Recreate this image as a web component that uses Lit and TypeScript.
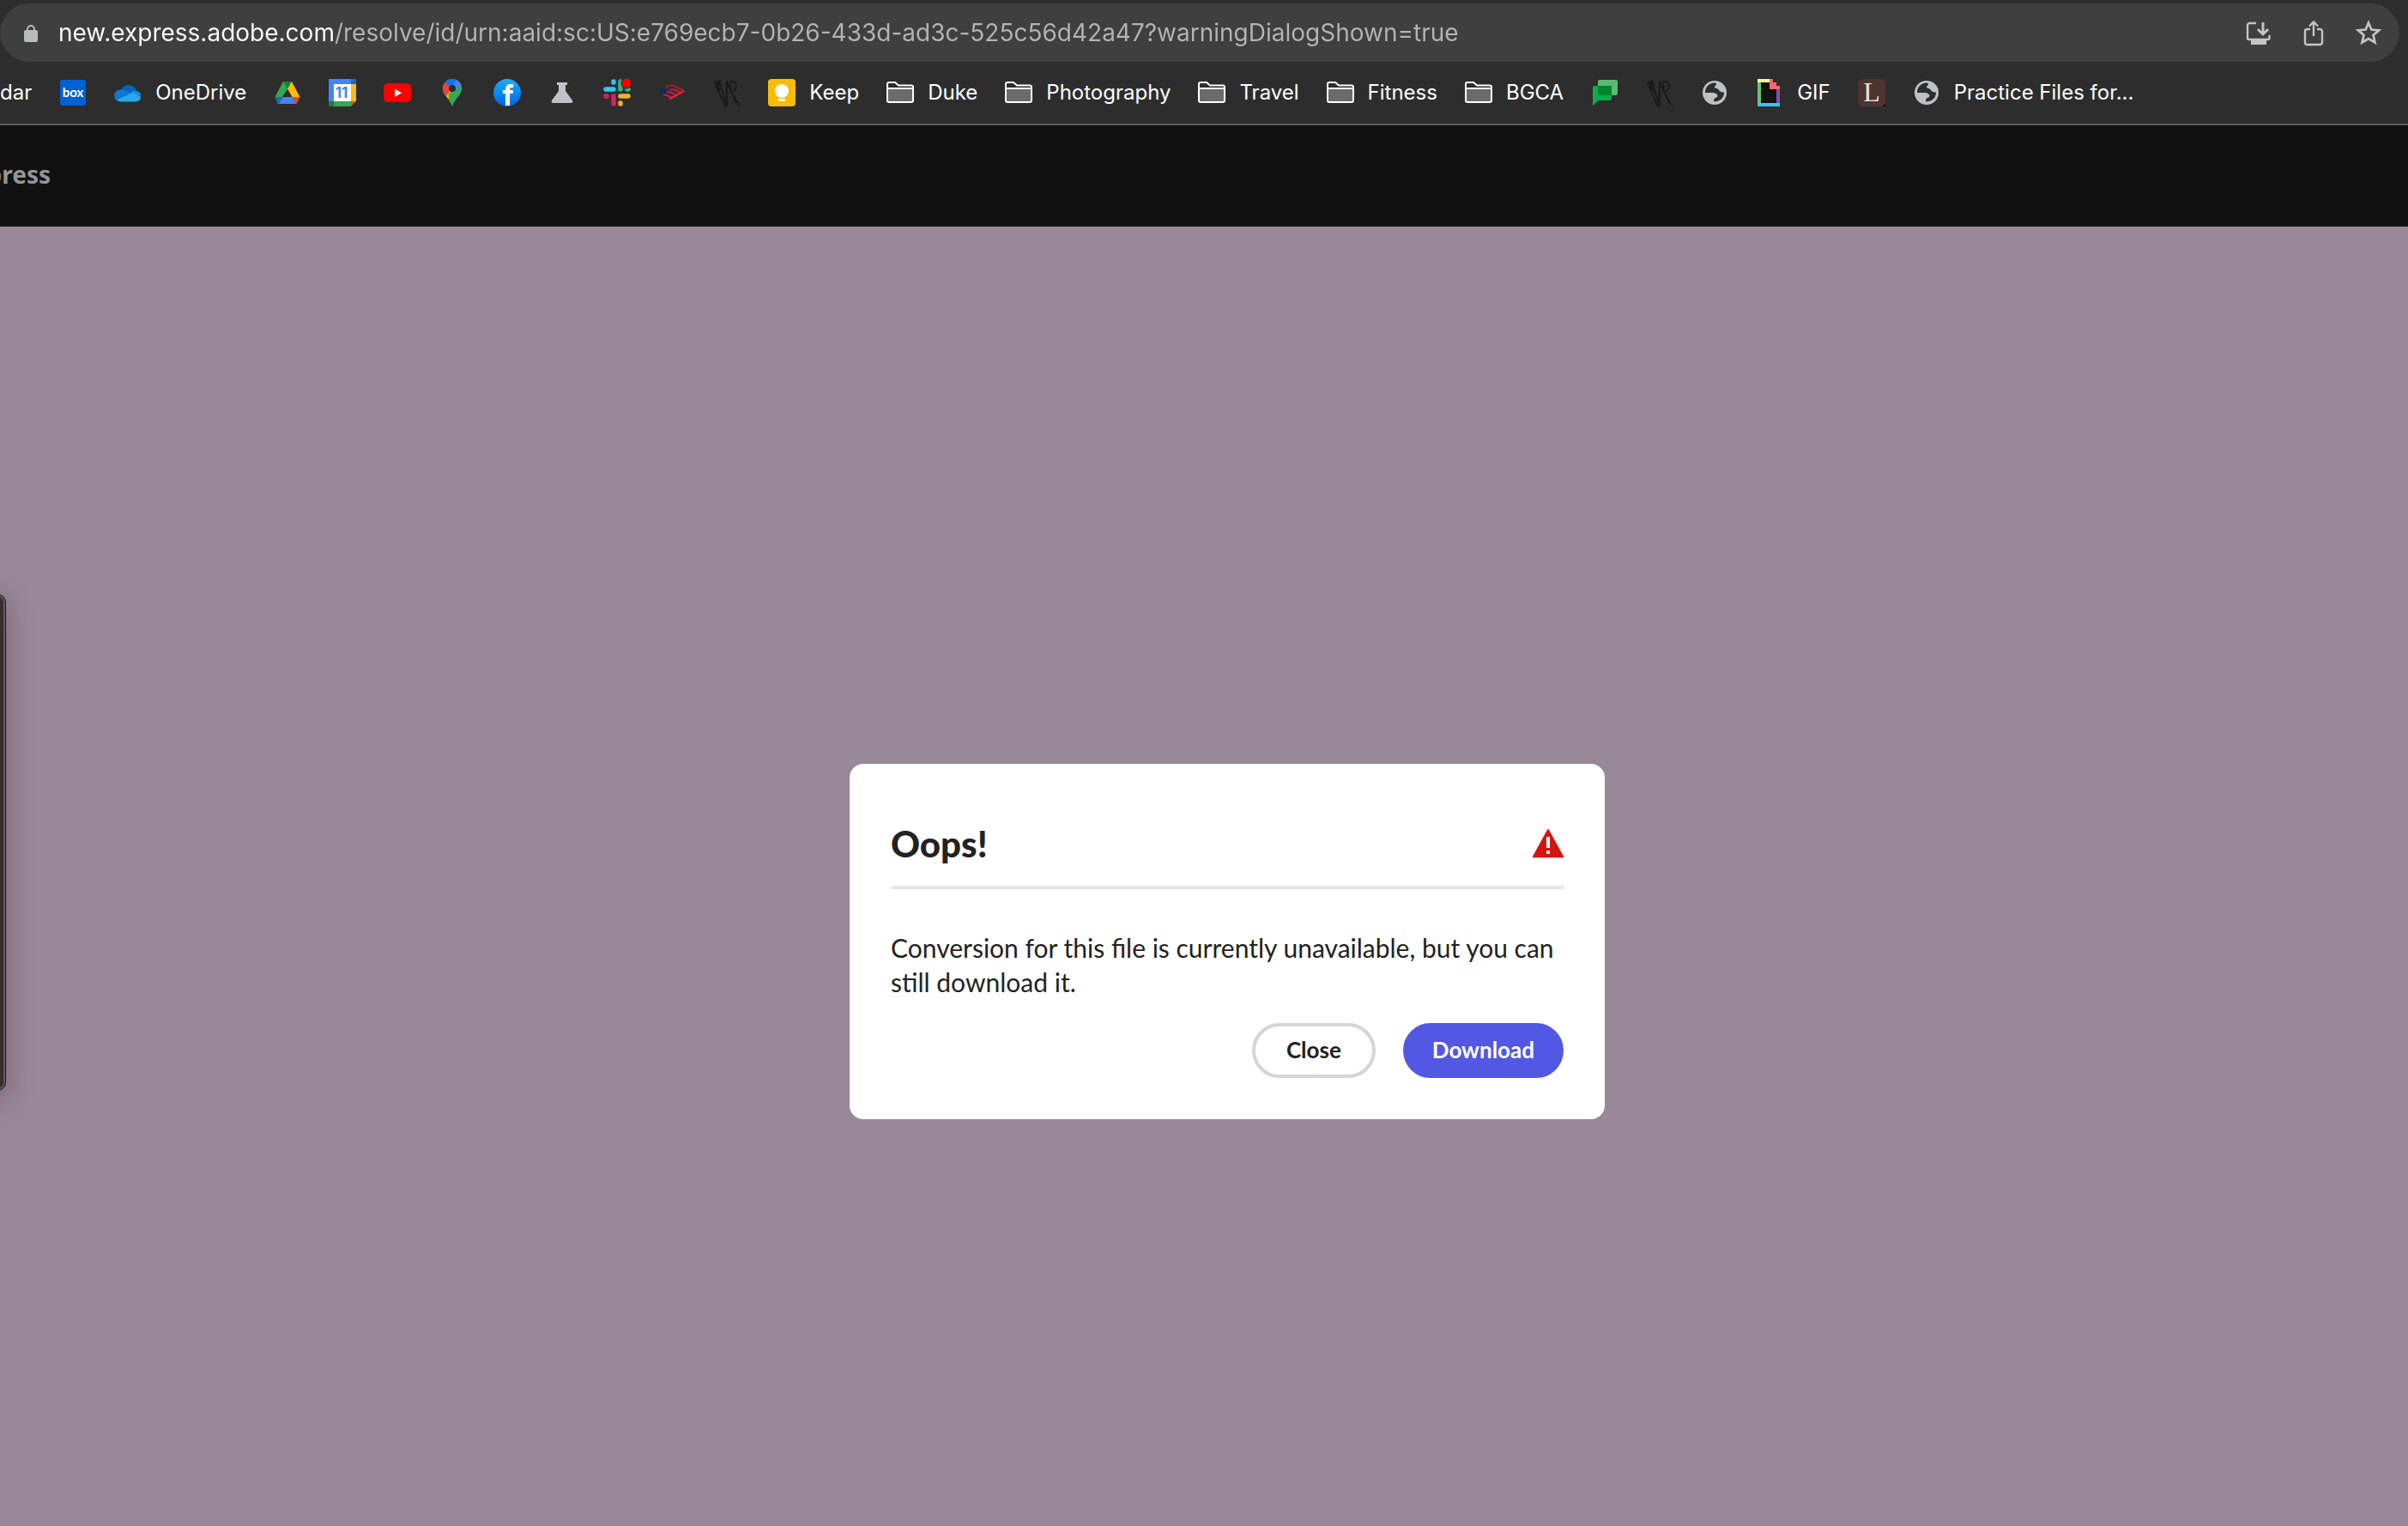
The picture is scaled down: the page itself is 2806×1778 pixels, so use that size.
import { LitElement, html, svg, css, nothing, type SVGTemplateResult } from "lit";
import { customElement, property } from "lit/decorators.js";

const folder = svg`
  <path d="M1 28V5a2 2 0 0 1 2-2h7l4 4h15a2 2 0 0 1 2 2v17a2 2 0 0 1-2 2H3a2 2 0 0 1-2-2z" fill="#2d2d2d"/>
  <path d="M2 12h28v14H2z" fill="#6b6b6b"/>
  <path d="M1 11h30M1 25V6a2 2 0 0 1 2-2h7l4 3.500h15a2 2 0 0 1 2 2V25a2 2 0 0 1-2 2H3a2 2 0 0 1-2-2z" fill="none" stroke="#fff" stroke-width="2"/>`;

const globe = svg`
  <circle cx="16" cy="16" r="14" fill="#bdc1c6"/>
  <path d="M5 16C5 10 9 5 15 4.500c2-.2 3 .3 3 1.500 0 1.500-2 2-2 3.500 0 2 4 1 5 3.500 1 2 3 2.500 6 2.500 0 4-2 8-6 9.800-2 .9-4 1.200-6 .9 0-2 .5-3.500 2-4.200 1.500-.6 2.500-1 2.500-2.200 0-2-2.500-3.800-6-3.800z" fill="#2d2d2d"/>`;

const monogram = svg`
  <path d="M4 9 14 32M9 10l7 22M16 2v30M16 2l-1 30M16 3l11 25M20 3c8-2 10 9 1 12l10 17M20 3v12M2 3c4 2 4 5 3 8M8 1c0 4-1 7-3 9M2 8l5 5M10 6 6 14M5 1l3 5M1 6l6-1" fill="none" stroke="#151515" stroke-width="1.300"/>`;

const icons: Record<string, SVGTemplateResult> = {
  folder,
  globe,
  monogram,
  lock: svg`
    <path d="M12 16v-4a4 4 0 0 1 8 0v4" fill="none" stroke="#b9bbbe" stroke-width="2"/>
    <rect x="8" y="13" width="16" height="14" rx="2" fill="#b9bbbe"/>`,
  install: svg`
    <path d="M13 5H5.500a2.500 2.500 0 0 0-2.500 2.500v15A1.500 1.500 0 0 0 4.500 24h22a2 2 0 0 0 2-2v-3" fill="none" stroke="#c4c4c4" stroke-width="2.400"/>
    <path d="M7 24h18v6H7z" fill="#c4c4c4"/>
    <path d="M21 4v14M15 12l6 6 6-6" fill="none" stroke="#c4c4c4" stroke-width="3"/>`,
  share: svg`
    <path d="M12 12H8.500A2.500 2.500 0 0 0 6 14.500v13A2.500 2.500 0 0 0 8.500 30h15a2.500 2.500 0 0 0 2.500-2.500v-13a2.500 2.500 0 0 0-2.500-2.500H20M16 20V4M11 8.500l5-5 5 5" fill="none" stroke="#c4c4c4" stroke-width="2.400"/>`,
  star: svg`
    <path d="M16 4.500l3.400 8 8.700.8-6.600 5.700 2 8.500L16 23l-7.500 4.500 2-8.500-6.600-5.700 8.700-.8z" fill="none" stroke="#c4c4c4" stroke-width="2.700"/>`,
  box: svg`
    <rect x="1" y="1" width="30" height="30" rx="3" fill="#0061d5"/>
    <text x="16" y="21" font-family="Lato, sans-serif" font-size="15" font-weight="700" text-anchor="middle" fill="#fff">box</text>`,
  onedrive: svg`
    <path d="M8 13a9.500 9.500 0 0 1 18 1l-8 6z" fill="#0364b8"/>
    <path d="M8 12.500a8 8 0 0 1 5.500 1L22 18 3 25a8 8 0 0 1-3-5.500 7.500 7.500 0 0 1 8-7z" fill="#0f78d4"/>
    <path d="M21 15c2-1.300 4-1.500 5.500-1a6.500 6.500 0 0 1 5 5l-9 1-5-3z" fill="#1490df"/>
    <path d="M3 24.500 21.500 16 31 20.500a5.600 5.600 0 0 1-5 6H8c-2 0-4-.7-5-2z" fill="#28a8ea"/>`,
  drive: svg`
    <path d="M11 3h10l-5 9-6.500 9.500-4.500 8L1.500 21z" fill="#34a853"/>
    <path d="M11 3h10l-5 8.500z" fill="#188038"/>
    <path d="M21 3l9.500 18h-9L16 11.500z" fill="#fbbc04"/>
    <path d="M10.500 21h11l5 8h-21z" fill="#4285f4"/>
    <path d="M1.500 21h9l-5 8z" fill="#1967d2"/>
    <path d="M21.500 21h9l-4 8z" fill="#ea4335"/>`,
  calendar: svg`
    <path d="M0 0h26v6H6v20H0z" fill="#4285f4"/>
    <path d="M26 0h6v6h-6z" fill="#1967d2"/>
    <path d="M26 6h6v20h-6z" fill="#fbbc04"/>
    <path d="M6 26h20v6H6z" fill="#34a853"/>
    <path d="M0 26h6v6H0z" fill="#188038"/>
    <path d="M26 26h6l-6 6z" fill="#ea4335"/>
    <path d="M6 6h20v20H6z" fill="#fff"/>
    <text x="15" y="22" font-family="Inter, sans-serif" font-size="17" font-weight="700" text-anchor="middle" fill="#4285f4">11</text>`,
  youtube: svg`
    <rect x="0" y="5" width="32" height="22" rx="5" fill="#f00"/>
    <path d="M13 11.500v9.500l8-4.700z" fill="#fff"/>`,
  maps: svg`
    <clipPath id="pin"><path d="M16 0a11 11 0 0 1 11 11c0 8-8 11-11 21C13 22 5 19 5 11A11 11 0 0 1 16 0z"/></clipPath>
    <g clip-path="url(#pin)">
      <path d="M0 0h32v32H0z" fill="#34a853"/>
      <path d="M28 5 0 36V8l16 3z" fill="#fbbc04"/>
      <path d="M0 13 8 4l8 7-8 10z" fill="#ea4335"/>
      <path d="M7 0h13v6l-4 5-9-7z" fill="#1a73e8"/>
      <path d="M20 0l8 5-13 15-1-9 6-8z" fill="#4285f4"/>
      <path d="M12 17 28 4v28H12z" fill="#34a853"/>
      <path d="M16 11 22 1l5 5-7 8z" fill="#4285f4"/>
    </g>
    <circle cx="16" cy="11" r="4" fill="#2d2d2d"/>`,
  facebook: svg`
    <linearGradient id="fb" x1="0" y1="0" x2="0" y2="1"><stop offset="0" stop-color="#19aeff"/><stop offset="1" stop-color="#0062e0"/></linearGradient>
    <circle cx="16" cy="16" r="16" fill="url(#fb)"/>
    <text x="17" y="31" font-family="Inter, sans-serif" font-size="33" font-weight="700" text-anchor="middle" fill="#fff">f</text>`,
  flask: svg`
    <path d="M10 4h12v3h-2v7l8 11c1 2 0 3-2 3H6c-2 0-3-1-2-3l8-11V7h-2z" fill="#c1c2c8"/>`,
  slack: svg`
    <g fill="none" stroke-width="5.500" stroke-linecap="round">
      <path d="M3 12h9M12 3v1" stroke="#36c5f0"/>
      <path d="M20 3v9M28 12h1" stroke="#2eb67d"/>
      <path d="M20 20h9M20 28v1" stroke="#ecb22e"/>
      <path d="M12 20v9M3 20h1" stroke="#e01e5a"/>
    </g>
    <circle cx="27" cy="5" r="6.500" fill="#2d2d2d"/>
    <circle cx="27" cy="5" r="5.300" fill="#f00"/>`,
  bank: svg`
    <path d="M0 13.500 6 11l8 4-6 4z" fill="#14295c"/>
    <path d="M8 17.500 13 20M12 15l5 3" stroke="#14295c" stroke-width="1.500"/>
    <path d="M9 9.500c3-2 6-2.500 9-1.500l12 6" fill="none" stroke="#a81c34" stroke-width="2.200"/>
    <path d="M14 12.500c2-.8 4-.5 5.500.3L26 16" fill="none" stroke="#c41e3a" stroke-width="2.200"/>
    <path d="M10 15.500c2-.8 3.500-.5 5 .3l6.500 3.200" fill="none" stroke="#c41e3a" stroke-width="2.200"/>
    <path d="M6 19c2-.8 3.500-.5 5 .3l6 3" fill="none" stroke="#c41e3a" stroke-width="2.200"/>
    <path d="M13 23.500l17-9.500" stroke="#dc2440" stroke-width="2.500"/>`,
  keep: svg`
    <rect width="32" height="32" rx="4" fill="#fbbc04"/>
    <circle cx="16" cy="14" r="8" fill="#fff"/>
    <path d="M12 18h8v3h-8zM12 23h8v3h-8z" fill="#fff"/>`,
  chat: svg`
    <rect x="8" y="1" width="23" height="18" rx="2" fill="#5bb974"/>
    <path d="M4 8h20v15a2 2 0 0 1-2 2H9l-7 6V10a2 2 0 0 1 2-2z" fill="#0dac4a"/>
    <path d="M8 8h16v9a2 2 0 0 1-2 2H10a2 2 0 0 1-2-2z" fill="#00832d"/>`,
  gif: svg`
    <path d="M6 4h18v24H6z" fill="#121212"/>
    <path d="M2 0h14v4H2z" fill="#fff59d"/>
    <path d="M2 4h4v24H2z" fill="#6cc07a"/>
    <path d="M2 28h26v4H2z" fill="#37c3f5"/>
    <path d="M24 12h4v16h-4z" fill="#7a54a8"/>
    <path d="M16 0h4v4h4v4h4v4H16z" fill="#f4676b"/>`,
  letter: svg`
    <rect width="32" height="32" rx="6" fill="#4e3430"/>
    <path d="M30 30h2v2h-2z" fill="#000"/>
    <text x="16" y="26" font-family="Liberation Serif, serif" font-size="32" text-anchor="middle" fill="#e8e4e2">L</text>`,
  alert: svg`
    <path d="M16 1a1 1 0 0 1 .9.500L32 29a1 1 0 0 1-.8 1.500H.8A1 1 0 0 1 0 29L15.100 1.500A1 1 0 0 1 16 1z" fill="#d31510"/>
    <path d="M14.200 9h3.600v11.500h-3.600zM14.200 23h3.600v3.500h-3.600z" fill="#fff"/>`,
};

@customElement("ui-icon")
export class UiIcon extends LitElement {
  @property() name = "";

  static styles = css`
    :host { display: block; flex: none; width: 32px; height: 32px; }
    svg { display: block; width: 100%; height: 100%; }
  `;

  render() {
    return html`<svg viewBox="0 0 32 32" aria-hidden="true">${icons[this.name] ?? nothing}</svg>`;
  }
}

interface Bookmark {
  icon: string;
  label?: string;
  title: string;
}

const bookmarks: Bookmark[] = [
  { icon: "box", title: "Box" },
  { icon: "onedrive", label: "OneDrive", title: "OneDrive" },
  { icon: "drive", title: "Drive" },
  { icon: "calendar", title: "Calendar" },
  { icon: "youtube", title: "YouTube" },
  { icon: "maps", title: "Maps" },
  { icon: "facebook", title: "Facebook" },
  { icon: "flask", title: "Labs" },
  { icon: "slack", title: "Slack" },
  { icon: "bank", title: "Bank" },
  { icon: "monogram", title: "Portfolio" },
  { icon: "keep", label: "Keep", title: "Keep" },
  { icon: "folder", label: "Duke", title: "Duke" },
  { icon: "folder", label: "Photography", title: "Photography" },
  { icon: "folder", label: "Travel", title: "Travel" },
  { icon: "folder", label: "Fitness", title: "Fitness" },
  { icon: "folder", label: "BGCA", title: "BGCA" },
  { icon: "chat", title: "Chat" },
  { icon: "monogram", title: "Portfolio" },
  { icon: "globe", title: "Website" },
  { icon: "gif", label: "GIF", title: "GIF" },
  { icon: "letter", title: "Library" },
  { icon: "globe", label: "Practice Files for...", title: "Practice Files" },
];

@customElement("browser-chrome")
export class BrowserChrome extends LitElement {
  static styles = css`
    :host {
      display: block;
      padding-top: 4px;
      background: #2d2d2d;
      border-bottom: 2px solid #5a5a5a;
      font-family: Inter, "Liberation Sans", sans-serif;
    }
    .address {
      display: flex;
      align-items: center;
      gap: 32px;
      height: 68px;
      margin-right: 10px;
      padding: 0 20px;
      box-sizing: border-box;
      border-radius: 34px;
      background: #3f3f3f;
    }
    .url {
      display: flex;
      flex: 1;
      align-items: center;
      gap: 16px;
      min-width: 0;
    }
    .field {
      flex: 1;
      min-width: 0;
      padding: 0;
      border: 0;
      outline: 0;
      font: 400 28px/40px Inter, "Liberation Sans", sans-serif;
      color: #b4b4b4;
      -webkit-text-fill-color: transparent;
      background: linear-gradient(to right, #fff 321px, #b4b4b4 321px);
      -webkit-background-clip: text;
      background-clip: text;
    }
    .tool { padding: 0; border: 0; background: none; }
    .bookmarks {
      display: flex;
      align-items: center;
      gap: 32px;
      height: 72px;
      overflow: hidden;
      white-space: nowrap;
    }
    .bookmark {
      display: flex;
      flex: none;
      align-items: center;
      gap: 16px;
      color: #fff;
      font-size: 24px;
      line-height: 32px;
      text-decoration: none;
    }
  `;

  render() {
    return html`
      <div class="address">
        <label class="url">
          <ui-icon name="lock"></ui-icon>
          <input class="field" type="text" aria-label="Address" spellcheck="false"
            value="new.express.adobe.com/resolve/id/urn:aaid:sc:US:e769ecb7-0b26-433d-ad3c-525c56d42a47?warningDialogShown=true">
        </label>
        <button class="tool" aria-label="Install"><ui-icon name="install"></ui-icon></button>
        <button class="tool" aria-label="Share"><ui-icon name="share"></ui-icon></button>
        <button class="tool" aria-label="Bookmark"><ui-icon name="star"></ui-icon></button>
      </div>
      <nav class="bookmarks">
        <a class="bookmark" href="#">dar</a>
        ${bookmarks.map(
          (b) => html`<a class="bookmark" href="#" aria-label=${b.title}>
            <ui-icon name=${b.icon}></ui-icon>${b.label ? html`<span>${b.label}</span>` : nothing}
          </a>`,
        )}
      </nav>
    `;
  }
}

@customElement("message-dialog")
export class MessageDialog extends LitElement {
  static styles = css`
    :host {
      display: block;
      width: 880px;
      max-width: 100%;
      padding: 64px 48px 48px;
      box-sizing: border-box;
      border-radius: 16px;
      background: #fff;
      color: #222;
      font-family: Lato, "Open Sans", sans-serif;
    }
    .head {
      display: flex;
      align-items: center;
      justify-content: space-between;
      height: 58px;
      padding-bottom: 20px;
      border-bottom: 4px solid #e6e6e6;
    }
    .title { margin: 0; font-size: 42px; line-height: 48px; font-weight: 900; }
    .alert { width: 36px; height: 36px; }
    .text { margin: 48px 0 28px; font-size: 30px; line-height: 40px; }
    .actions { display: flex; justify-content: flex-end; gap: 32px; }
    .button {
      height: 64px;
      padding: 0 30px 2px;
      border: 4px solid #5258e4;
      border-radius: 32px;
      background: #5258e4;
      color: #fff;
      font: 700 26px/32px Lato, "Open Sans", sans-serif;
    }
    .quiet { padding: 0 36px 2px; border-color: #d5d5d5; background: #fff; color: #222; }
  `;

  render() {
    return html`
      <header class="head">
        <h1 class="title">Oops!</h1>
        <ui-icon class="alert" name="alert"></ui-icon>
      </header>
      <p class="text">Conversion for this file is currently unavailable, but you can still download it.</p>
      <div class="actions">
        <button class="button quiet">Close</button>
        <button class="button">Download</button>
      </div>
    `;
  }
}

@customElement("app-root")
export class AppRoot extends LitElement {
  static styles = css`
    :host {
      display: flex;
      flex-direction: column;
      min-height: 100vh;
      background: #998898;
    }
    .brand {
      display: flex;
      align-items: center;
      height: 118px;
      padding-bottom: 4px;
      box-sizing: border-box;
      overflow: hidden;
      background: #111;
      color: #959595;
      font: 700 28px/40px "Noto Sans", "Open Sans", sans-serif;
    }
    .name { display: flex; justify-content: flex-end; width: 59px; }
    .stage {
      position: relative;
      display: grid;
      flex: 1;
      place-items: center;
      padding: 152px 0 0 54px;
      box-sizing: border-box;
      overflow: hidden;
    }
    .panel {
      position: absolute;
      top: 428px;
      left: -40px;
      width: 47px;
      height: 579px;
      box-sizing: border-box;
      border: 1px solid #1c1a1c;
      border-radius: 10px;
      background: #35302c;
      box-shadow: inset 0 0 0 2px #625c60, 0 8px 32px rgba(60, 30, 60, 0.4);
    }
  `;

  render() {
    return html`
      <browser-chrome></browser-chrome>
      <div class="brand"><span class="name">press</span></div>
      <main class="stage">
        <div class="panel"></div>
        <message-dialog role="alertdialog" aria-label="Oops!"></message-dialog>
      </main>
    `;
  }
}
